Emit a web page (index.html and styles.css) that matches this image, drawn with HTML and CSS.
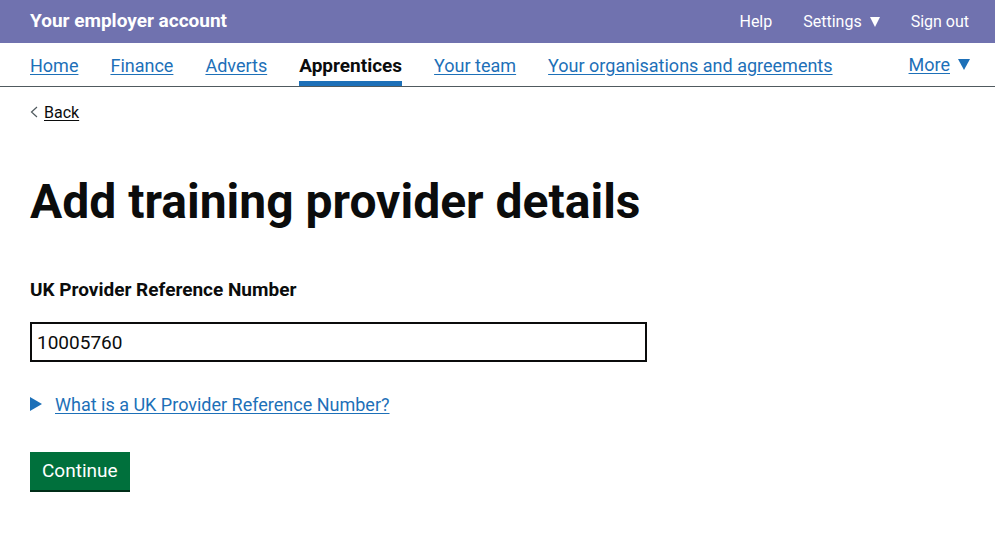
FILE: index.html
```html
<!DOCTYPE html>
<html lang="en">
<head>
<meta charset="utf-8">
<meta name="viewport" content="width=device-width, initial-scale=1">
<title>Add training provider details</title>
<link rel="stylesheet" href="styles.css">
</head>
<body>
<header class="header">
  <span class="header-title">Your employer account</span>
  <nav class="header-links" aria-label="Account">
    <a href="#">Help</a>
    <a href="#">Settings <svg class="caret" viewBox="0 0 10 10" aria-hidden="true"><path d="M0 0h10L5 10z"/></svg></a>
    <a href="#">Sign out</a>
  </nav>
</header>
<nav class="nav" aria-label="Main">
  <a href="#">Home</a>
  <a href="#">Finance</a>
  <a href="#">Adverts</a>
  <a href="#" class="current" aria-current="page">Apprentices</a>
  <a href="#">Your team</a>
  <a href="#">Your organisations and agreements</a>
  <div class="more"><a href="#">More</a><svg class="more-caret" viewBox="0 0 12 11" aria-hidden="true"><path d="M0 0h12L6 11z"/></svg></div>
</nav>
<main class="main">
  <a class="back" href="#"><svg class="chevron" viewBox="0 0 8 12" aria-hidden="true"><path d="M7 1L1.500 6 7 11"/></svg><span>Back</span></a>
  <h1>Add training provider details</h1>
  <form class="form">
    <label for="ukprn">UK Provider Reference Number</label>
    <input id="ukprn" type="text" value="10005760">
    <details class="details">
      <summary><svg class="marker" viewBox="0 0 12 14" aria-hidden="true"><path d="M0 0l12 7-12 7z"/></svg><span>What is a UK Provider Reference Number?</span></summary>
    </details>
    <button type="button">Continue</button>
  </form>
</main>
</body>
</html>
```
FILE: styles.css
```css
* { box-sizing: border-box; }
body {
  margin: 0;
  background: #fff;
  color: #0b0c0c;
  font-family: Roboto, "Liberation Sans", sans-serif;
  font-size: 19px;
  line-height: 25px;
}
a { color: #1d70b8; text-underline-offset: 2px; }
.header {
  display: flex;
  align-items: baseline;
  justify-content: space-between;
  min-height: 43px;
  padding: 8px 26px 8px 30px;
  background: #7072af;
  color: #fff;
}
.header-title { font-weight: 700; }
.header-links { display: flex; gap: 31px; font-size: 16px; }
.header-links a { color: #fff; text-decoration: none; }
.caret { width: 10px; height: 10px; margin-left: 4px; fill: #fff; }
.nav {
  display: flex;
  gap: 32px;
  height: 44px;
  padding: 0 25px 0 30px;
  border-bottom: 1px solid #505a5f;
  font-size: 18px;
  line-height: 45px;
}
.nav .current {
  border-bottom: 5px solid #1d70b8;
  color: #0b0c0c;
  font-size: 19px;
  font-weight: 700;
  text-decoration: none;
}
.more { display: flex; align-items: center; gap: 8px; margin-left: auto; }
.more-caret { width: 12px; height: 11px; fill: #1d70b8; }
.main { padding: 12px 30px 40px; }
.back {
  display: inline-flex;
  align-items: center;
  gap: 6px;
  color: #0b0c0c;
  font-size: 16px;
  text-decoration: none;
}
.back span { text-decoration: underline; text-underline-offset: 2px; }
.chevron { width: 8px; height: 12px; fill: none; stroke: #505a5f; stroke-width: 1.2; }
h1 { margin: 52px 0 50px; font-size: 48px; line-height: 50px; }
.form { display: flex; flex-direction: column; align-items: flex-start; }
label { margin-bottom: 20px; font-weight: 700; }
input {
  width: 66%;
  height: 40px;
  padding: 6px 5px 4px;
  border: 2px solid #0b0c0c;
  border-radius: 0;
  color: #0b0c0c;
  font: inherit;
}
.details { margin: 30px 0 35px; font-size: 18px; }
summary {
  display: flex;
  align-items: center;
  gap: 13px;
  color: #1d70b8;
  list-style: none;
}
summary span { text-decoration: underline; text-underline-offset: 2px; }
.marker { width: 12px; height: 14px; fill: #1d70b8; }
button {
  height: 40px;
  padding: 0 12px;
  border: 0;
  border-bottom: 2px solid #002d18;
  background: #00703c;
  color: #fff;
  font: inherit;
}
```
